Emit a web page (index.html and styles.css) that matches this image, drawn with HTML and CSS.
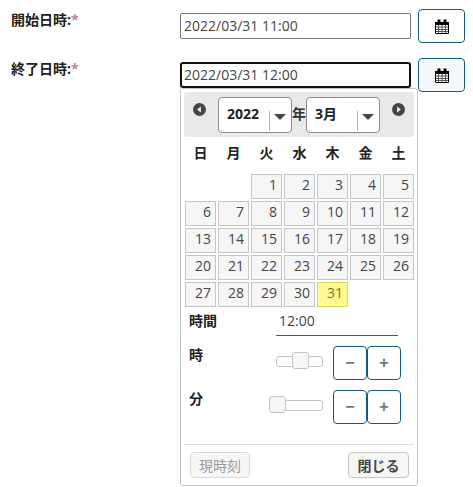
FILE: index.html
```html
<!DOCTYPE html>
<html lang="ja">
<head>
    <meta charset="UTF-8">
    <title>日時入力</title>
    <link rel="stylesheet" href="styles.css">
</head>
<body>

<svg class="icon-defs" width="0" height="0">
    <symbol id="cal" viewBox="0 0 14 15">
        <path d="M.5 3.5h13v11H.5z" fill="#fff" stroke="#000" stroke-width="1"/>
        <path d="M0 3h14v3H0z" fill="#000"/>
        <path d="M2.5 .5h3v4h-3zM8.5 .5h3v4h-3z" fill="#000"/>
        <path d="M1 8h12M1 10.5h12M1 12.5h12M3.5 6v8M7 6v8M10.5 6v8" stroke="#555" stroke-width="1" fill="none"/>
    </symbol>
</svg>

<div class="form">
    <div class="row">
        <label class="row-label">開始日時:<span class="req">*</span></label>
        <input class="date-input" type="text" value="2022/03/31 11:00">
        <button class="cal-btn"><svg width="14" height="15"><use href="#cal"/></svg></button>
    </div>
    <div class="row">
        <label class="row-label">終了日時:<span class="req">*</span></label>
        <input class="date-input is-focus" type="text" value="2022/03/31 12:00">
        <button class="cal-btn is-hover"><svg width="14" height="15"><use href="#cal"/></svg></button>
    </div>
</div>

<!-- datepicker popup -->
<div class="picker">
    <div class="picker-head">
        <span class="nav-btn">
            <svg width="13" height="13" viewBox="0 0 13 13"><circle cx="6.5" cy="6.5" r="6.5" fill="#454545"/><path d="M7.8 3.4v6.2L4.2 6.5z" fill="#fff"/></svg>
        </span>
        <div class="head-selects">
            <span class="sel sel-year"><b>2022</b><i class="sel-arrow"></i></span>
            <span class="head-year">年</span>
            <span class="sel"><b>3月</b><i class="sel-arrow"></i></span>
        </div>
        <span class="nav-btn">
            <svg width="13" height="13" viewBox="0 0 13 13"><circle cx="6.5" cy="6.5" r="6.5" fill="#454545"/><path d="M5.2 3.4v6.2l3.6-3.1z" fill="#fff"/></svg>
        </span>
    </div>

    <div class="week">
        <span>日</span><span>月</span><span>火</span><span>水</span><span>木</span><span>金</span><span>土</span>
    </div>

    <div class="days">
        <span class="blank"></span><span class="blank"></span>
        <a>1</a><a>2</a><a>3</a><a>4</a><a>5</a>
        <a>6</a><a>7</a><a>8</a><a>9</a><a>10</a><a>11</a><a>12</a>
        <a>13</a><a>14</a><a>15</a><a>16</a><a>17</a><a>18</a><a>19</a>
        <a>20</a><a>21</a><a>22</a><a>23</a><a>24</a><a>25</a><a>26</a>
        <a>27</a><a>28</a><a>29</a><a>30</a><a class="today">31</a>
    </div>

    <div class="time-row">
        <span class="time-label">時間</span>
        <span class="time-value">12:00</span>
    </div>

    <div class="slider-row">
        <span class="time-label">時</span>
        <span class="slider slider-hour"><i class="handle"></i></span>
        <div class="steps"><button class="step">−</button><button class="step">+</button></div>
    </div>

    <div class="slider-row">
        <span class="time-label">分</span>
        <span class="slider slider-min"><i class="handle"></i></span>
        <div class="steps"><button class="step">−</button><button class="step">+</button></div>
    </div>

    <div class="picker-foot">
        <button class="foot-btn" disabled>現時刻</button>
        <button class="foot-btn foot-close">閉じる</button>
    </div>
</div>

</body>
</html>
```
FILE: styles.css
```css
html, body {
    height: 100%;
    overflow: hidden;
}
body {
    margin: 0;
    position: relative;
    background: #fff;
    color: #333;
    font-family: "Open Sans", "Noto Sans CJK JP", sans-serif;
    font-size: 14px;
}
.icon-defs {
    position: absolute;
}
.form {
    padding-top: 9px;
}
.row {
    display: flex;
    align-items: center;
    height: 34px;
    margin-bottom: 15px;
    padding-left: 11px;
    position: relative;
}
.row-label {
    width: 169px;
    align-self: flex-start;
    color: #222;
    font-size: 14px;
    font-weight: bold;
    line-height: 20px;
    margin-top: 1px;
}
.req {
    color: #c8808f;
}
.date-input {
    box-sizing: border-box;
    width: 231px;
    height: 26px;
    padding: 0 3px 2px;
    border: 1px solid #767676;
    border-radius: 2px;
    background: #fff;
    color: #444;
    font-family: inherit;
    font-size: 14px;
}
.date-input.is-focus {
    border: 2px solid #101010;
    border-radius: 3px;
    padding: 0 2px 2px;
    outline: none;
}
.cal-btn {
    box-sizing: border-box;
    width: 47px;
    height: 34px;
    margin-left: 7px;
    padding: 0;
    border: 1px solid #175a7f;
    border-radius: 4px;
    background: #fff;
    display: flex;
    align-items: center;
    justify-content: center;
}
.cal-btn.is-hover {
    background: #f5f8fb;
}

/* popup */
.picker {
    position: absolute;
    left: 180px;
    top: 88px;
    box-sizing: border-box;
    width: 238px;
    height: 398px;
    padding: 3px;
    background: #fff;
    border: 1px solid #c5c5c5;
    border-radius: 3px;
}
.picker-head {
    height: 45px;
    background: #e9e9e9;
    border-radius: 3px;
    display: flex;
    justify-content: space-between;
    padding: 0 9px;
    box-sizing: border-box;
}
.nav-btn {
    margin-top: 9px;
    height: 13px;
}
.head-selects {
    display: flex;
    align-items: center;
    margin-top: 5px;
    height: 36px;
}
.sel {
    box-sizing: border-box;
    display: flex;
    align-items: center;
    width: 74px;
    height: 36px;
    padding: 0 0 4px 8px;
    background: #fff;
    border: 1px solid #8e8e8e;
    border-radius: 4px;
    font-size: 14px;
    color: #222;
    position: relative;
}
.sel-arrow {
    position: absolute;
    right: 5px;
    top: 16px;
    width: 0;
    height: 0;
    border-top: 6px solid #444;
    border-left: 6px solid transparent;
    border-right: 6px solid transparent;
}
.sel-arrow::before {
    content: "";
    position: absolute;
    left: -11px;
    top: -9px;
    height: 20px;
    border-left: 1px solid #b5b5b5;
}
.head-year {
    width: 14px;
    color: #333;
    font-weight: bold;
    font-size: 14px;
    text-align: center;
    padding-bottom: 4px;
}
.week {
    display: grid;
    grid-template-columns: repeat(7, 31px);
    column-gap: 2px;
    margin-left: 1px;
    height: 37px;
    padding-bottom: 8px;
    box-sizing: border-box;
    align-items: center;
    text-align: center;
    font-size: 14px;
    font-weight: bold;
    color: #222;
}
.days {
    display: grid;
    grid-template-columns: repeat(7, 31px);
    grid-auto-rows: 25px;
    gap: 2px;
    margin-left: 1px;
}
.days a {
    box-sizing: border-box;
    border: 1px solid #c5c5c5;
    background: #f6f6f6;
    color: #454545;
    font-size: 14px;
    line-height: 20px;
    text-align: right;
    padding-right: 4px;
}
.days a.today {
    background: #fffa90;
    border-color: #dad55e;
    color: #777620;
}
.time-row {
    display: flex;
    height: 27px;
    margin-top: 3px;
    position: relative;
}
.time-label {
    font-size: 14px;
    font-weight: bold;
    color: #222;
    line-height: 20px;
    margin-left: 5px;
    margin-top: -1px;
    width: 87px;
}
.time-row .time-label {
    margin-top: 1px;
}
.time-value {
    box-sizing: border-box;
    width: 122px;
    height: 26px;
    padding-left: 3px;
    border-bottom: 1px solid #555;
    line-height: 22px;
    color: #444;
    font-size: 14px;
}
.slider-row {
    display: flex;
    height: 34px;
    margin-top: 10px;
    position: relative;
}
.time-row + .slider-row {
    margin-top: 9px;
}
.slider {
    box-sizing: border-box;
    display: block;
    height: 11px;
    margin-top: 10px;
    background: #fff;
    border: 1px solid #c5c5c5;
    border-radius: 3px;
    position: relative;
}
.slider-hour {
    width: 47px;
}
.slider-min {
    width: 54px;
    margin-left: -7px;
}
.handle {
    box-sizing: border-box;
    position: absolute;
    top: -5px;
    width: 17px;
    height: 17px;
    background: #f6f6f6;
    border: 1px solid #c5c5c5;
    border-radius: 3px;
}
.slider-hour .handle {
    left: 15px;
}
.slider-min .handle {
    left: -1px;
}
.steps {
    display: flex;
    margin-left: 10px;
}
.step {
    box-sizing: border-box;
    width: 34px;
    height: 34px;
    padding: 0;
    background: #fff;
    border: 1px solid #175a7f;
    border-radius: 4px;
    color: #777;
    font-family: "Liberation Sans", sans-serif;
    font-size: 16px;
    font-weight: bold;
}
.picker-foot {
    display: flex;
    justify-content: space-between;
    margin-top: 20px;
    padding: 7px 5px 0 6px;
    border-top: 1px solid #ddd;
}
.foot-btn {
    box-sizing: border-box;
    height: 26px;
    width: 60px;
    padding: 0;
    background: #f6f6f6;
    border: 1px solid #c5c5c5;
    border-radius: 4px;
    color: #454545;
    font-family: inherit;
    font-size: 14px;
    font-weight: bold;
}
.foot-btn:disabled {
    color: #9a9a9a;
    font-weight: normal;
    border-color: #d8d8d8;
}
.foot-close {
    width: 61px;
}
```
